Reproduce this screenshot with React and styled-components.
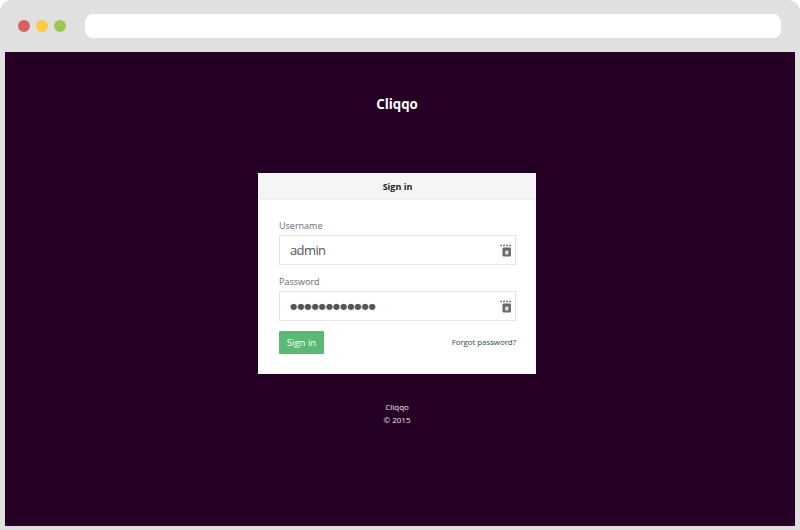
import { createGlobalStyle } from "styled-components";
import styled from "styled-components";

const Global = createGlobalStyle`
  html, body {
    margin: 0;
    padding: 0;
    background: #fff;
  }
`;

const Browser = styled.div`
  width: 800px;
  height: 530px;
  box-sizing: border-box;
  background: #e0e0e0;
  border-radius: 12px 12px 0 0;
  display: flex;
  flex-direction: column;
  padding: 0 5px 4px;
  font-family: "Open Sans", sans-serif;
  overflow: hidden;
`;

const TopBar = styled.div`
  height: 52px;
  flex: none;
  display: flex;
  align-items: center;
  padding: 0 14px 0 13px;
`;

const Dot = styled.span`
  width: 12px;
  height: 12px;
  border-radius: 50%;
  margin-right: 6px;
  background: ${(props) => props.color};
`;

const AddressBar = styled.div`
  flex: 1;
  height: 24px;
  margin-left: 13px;
  background: #fff;
  border-radius: 8px;
`;

const Page = styled.div`
  flex: 1;
  background: #250024;
  display: flex;
  flex-direction: column;
  align-items: center;
  padding-right: 6px;
`;

const Logo = styled.h1`
  margin: 42px 0 0;
  height: 20px;
  line-height: 20px;
  font-size: 13.3px;
  font-weight: 700;
  color: #fff;
`;

const Card = styled.div`
  width: 278px;
  height: 201px;
  margin-top: 59px;
  background: #fff;
  display: flex;
  flex-direction: column;
`;

const CardHeader = styled.div`
  height: 27px;
  box-sizing: border-box;
  background: #f5f5f5;
  border-bottom: 1px solid #eeeeee;
  text-align: center;
  font-size: 9px;
  font-weight: 700;
  line-height: 27px;
  padding-left: 1px;
  color: #222;
`;

const Form = styled.form`
  padding: 20px 20px 0 21px;
  display: flex;
  flex-direction: column;
`;

const Label = styled.label`
  font-size: 9px;
  line-height: 12px;
  height: 15px;
  color: #6b6b73;
  display: block;
`;

const InputWrap = styled.div`
  position: relative;
  height: 30px;
  margin-bottom: ${(props) => props.$gap}px;
`;

const Input = styled.input`
  width: 100%;
  height: 100%;
  box-sizing: border-box;
  border: 1px solid #e3e3e3;
  background: #fff;
  padding: 0 10px;
  font-family: "Open Sans", sans-serif;
  font-size: 13px;
  letter-spacing: -0.6px;
  color: #555;
  outline: none;
`;

const DotsInput = styled(Input)`
  font-family: "DejaVu Sans", sans-serif;
  font-size: 8.2px;
  letter-spacing: 0;
`;

const KeyIcon = styled.svg`
  position: absolute;
  right: 4px;
  top: 9px;
  width: 12px;
  height: 13px;
`;

const Actions = styled.div`
  display: flex;
  align-items: center;
  justify-content: space-between;
`;

const Button = styled.button`
  width: 45px;
  height: 23px;
  padding: 0;
  border: none;
  border-radius: 1px;
  background: #5cb974;
  color: #fff;
  font-family: "Open Sans", sans-serif;
  font-size: 9.5px;
`;

const Forgot = styled.a`
  font-size: 8px;
  letter-spacing: -0.1px;
  color: #2f4a4a;
  margin-top: -3px;
`;

const Footer = styled.div`
  margin-top: 26px;
  text-align: center;
  font-size: 8px;
  line-height: 13px;
  color: #f2e6f2;
`;

function PassIcon() {
  return (
    <KeyIcon viewBox="0 0 12 13">
      <circle cx="1" cy="1.5" r="1" fill="#777" />
      <circle cx="4" cy="1.5" r="1" fill="#777" />
      <circle cx="7" cy="1.5" r="1" fill="#777" />
      <circle cx="10" cy="1.5" r="1" fill="#777" />
      <rect x="2.5" y="3.5" width="8.5" height="9" rx="1" fill="#6a6a6a" />
      <rect x="5" y="6.5" width="3.5" height="4" rx="1" fill="#dcdcdc" />
    </KeyIcon>
  );
}

export default function App() {
  return (
    <Browser>
      <Global />
      <TopBar>
        <Dot color="#d9605f" />
        <Dot color="#fbc93d" />
        <Dot color="#9cc850" />
        <AddressBar />
      </TopBar>
      <Page>
        <Logo>Cliqqo</Logo>
        <Card>
          <CardHeader>Sign in</CardHeader>
          <Form>
            <Label>Username</Label>
            <InputWrap $gap={11}>
              <Input type="text" value="admin" readOnly />
              <PassIcon />
            </InputWrap>
            <Label>Password</Label>
            <InputWrap $gap={10}>
              <DotsInput type="text" value="●●●●●●●●●●●●" readOnly />
              <PassIcon />
            </InputWrap>
            <Actions>
              <Button type="button">Sign in</Button>
              <Forgot>Forgot password?</Forgot>
            </Actions>
          </Form>
        </Card>
        <Footer>
          Cliqqo
          <br />© 2015
        </Footer>
      </Page>
    </Browser>
  );
}
